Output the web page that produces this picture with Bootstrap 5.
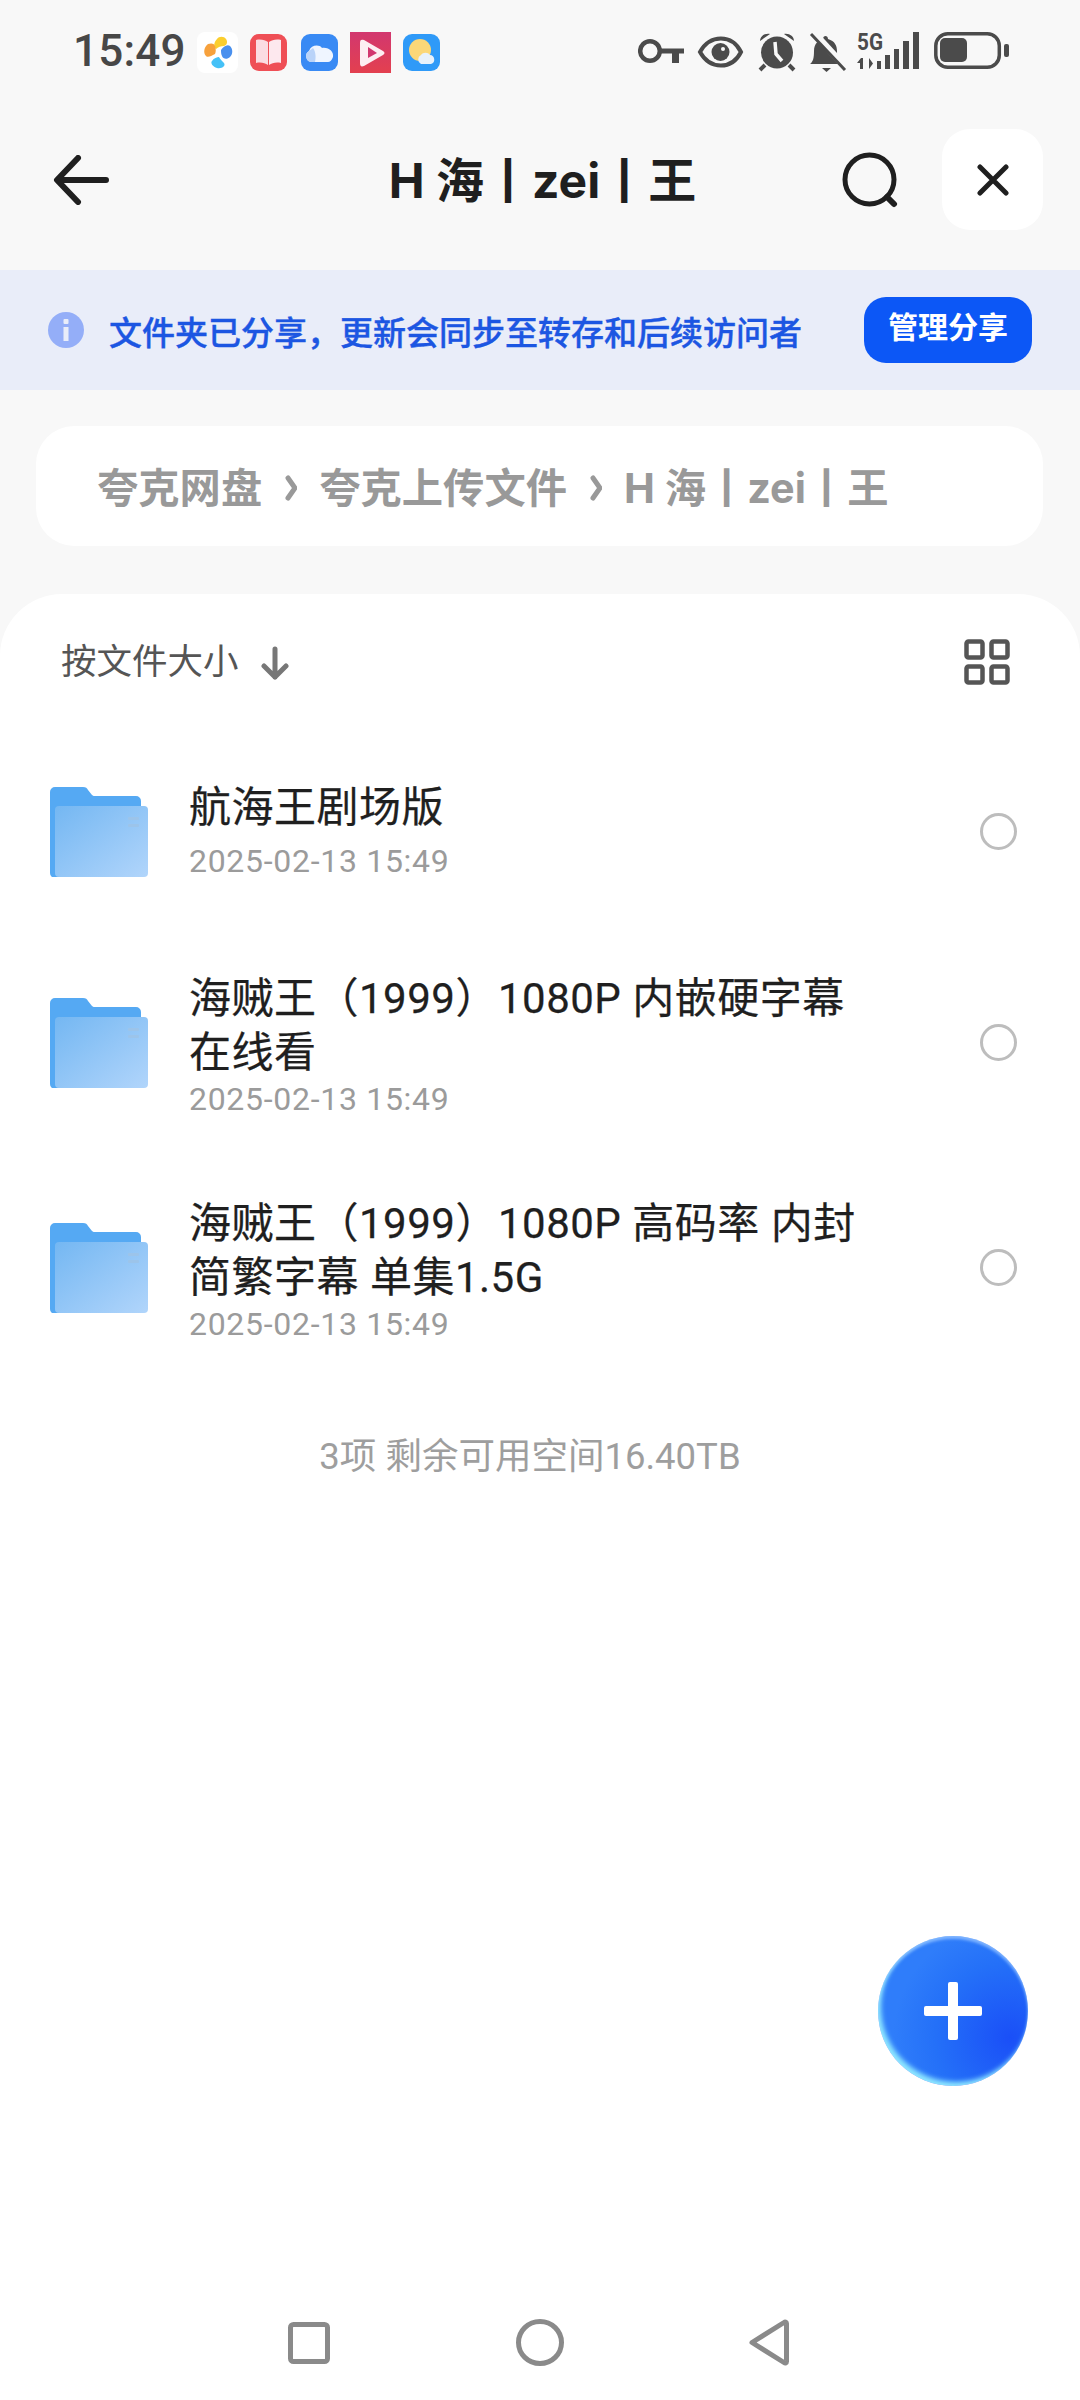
<!DOCTYPE html>
<html lang="zh-CN">
<head>
<meta charset="utf-8">
<title>H 海丨zei丨王</title>
<link href="https://cdn.jsdelivr.net/npm/bootstrap@5.3.0/dist/css/bootstrap.min.css" rel="stylesheet">
<style>
html,body{height:2400px;width:1080px;margin:0}
body{background:#f8f8f8;font-family:Roboto,"Noto Sans CJK SC",sans-serif;color:#1f1f1f;overflow:hidden}
.phone{position:relative;height:2400px}
.stat{height:104px;padding:0 71px 0 73px;color:#484848}
.clock{font-size:44px;font-weight:500;line-height:1;width:110px;margin-right:14px;margin-top:-2px;color:#474747;letter-spacing:.2px;flex:none}
.apps{gap:12px}
.apps svg:nth-child(3){margin-left:2px}
.head{height:166px;padding:0 37px 15px 53px}
.head-title{font-family:Inter,"Noto Sans CJK SC",sans-serif;font-size:48px;font-weight:700;line-height:1;color:#1f1f1f;white-space:nowrap;padding-left:134px;margin-top:3px}
.closer{width:101px;height:101px;border-radius:28px;background:#fff;margin-left:44px;border:0;padding:0;flex:none}
.notice{height:120px;background:#e9edf9;padding:0 48px 0 48px}
.notice-text{font-size:33px;font-weight:500;-webkit-text-stroke:.4px #1c56e2;color:#1c56e2;margin-left:25px;white-space:nowrap;line-height:1;margin-top:6px}
.manage{width:168px;height:66px;border-radius:22px;background:#0c57f6;border:0;color:#fff;font-size:30px;font-weight:700;line-height:1;padding:0 0 5px}
.manage:hover{background:#0c57f6;color:#fff}
.crumb{margin:36px 37px 48px 36px;height:120px;border-radius:38px;background:#fff;padding:0 61px;color:#999;font-family:Inter,"Noto Sans CJK SC",sans-serif;font-size:41.300px;font-weight:700;white-space:nowrap}
.crumb span{margin-top:5px}
.crumb svg{margin:4px 22px 0 23px;flex:none}
.sheet{background:#fff;border-radius:62px 62px 0 0;flex:1 1 auto;min-height:0}
.sheet-head{height:135px;padding:0 70px 0 61px;color:#555;font-size:35.500px}
.sheet-head span{margin-top:3px}
.sheet-head svg.arr{margin-left:21px;margin-top:2px}
.rows{margin-top:4px}
.rowi{min-height:197px;padding:35.500px 63px;padding-left:50px;border:0;background:transparent}
.rowi .txt{margin-left:41px;width:700px;padding-top:6px}
.rowi.solo .txt{padding-top:0}
.rowi.solo .dt{margin-top:7px}
.ttl{font-size:42px;line-height:54px;color:#1f1f1f;font-weight:400;letter-spacing:.5px;-webkit-text-stroke:.25px #1f1f1f}
.dt{font-size:32px;line-height:38px;color:#9b9b9b;letter-spacing:.7px;margin-bottom:2px}
.tick{width:37px;height:37px;border-radius:50%;border:3px solid #bdbdbd;margin-left:auto;flex:none}
.tail{font-size:36.500px;color:#9e9e9e;margin-top:55px;line-height:44px;padding-right:20px}
.fab{position:absolute;left:878px;top:1936px;width:150px;height:150px;border-radius:50%;border:0;padding:0;background:radial-gradient(circle at 88% 68%,#1a4ff7 0,#2470f8 45%,#2f7dfa 70%),#2f7dfa;box-shadow:inset 3px -4px 5px #8fe8ff,inset 0 3px 3px #7fb4ff}
.navb{height:114px;background:#fff}
.nvi{margin-left:260px}
</style>
</head>
<body>
<div class="phone d-flex flex-column">
  <div class="stat d-flex align-items-center flex-shrink-0">
    <span class="clock">15:49</span>
    <div class="apps d-flex align-items-center">
      <svg width="41" height="41" viewBox="0 0 41 41"><rect width="41" height="41" rx="8" fill="#fff"/><path d="M19 17c-3-2-2-7 1-10 2-3 7-3 9 0 2 3 1 6-2 7-3 0-6 1-8 3z" fill="#fbce2e"/><path d="M18 22c-4 2-7 4-9 2-3-3-2-9 2-12 3-1 6-1 7 2 1 3 1 6 0 8z" fill="#f7a13c"/><path d="M24 18c2-3 6-6 9-4 3 3 3 8 0 11-3 3-7 2-8-1-1-2-1-4-1-6z" fill="#4a90ee"/><path d="M22 25c1 2 3 4 5 6 2 3-2 6-7 5-4-1-7-5-5-7 2-3 5-4 7-4z" fill="#45c1f7"/></svg>
      <svg width="37" height="37" viewBox="0 0 37 37"><rect width="37" height="37" rx="9" fill="#ef4f56"/><path d="M6 6c5-1 9 0 12 2v23c-3-2-7-3-12-2z" fill="#fbdce2"/><path d="M31 6c-5-1-9 0-12 2v23c3-2 7-3 12-2z" fill="#fde8ee"/></svg>
      <svg width="37" height="37" viewBox="0 0 37 37"><rect width="37" height="37" rx="9" fill="#398af4"/><path d="M10 28a6 6 0 0 1-2-11c2-6 10-7 13-3 7-1 12 4 11 9-1 3-3 5-5 5z" fill="#eff5ff"/><path d="M10 28a6 6 0 0 1-2-11l4-3c3 4 3 10 2 14z" fill="#b9d3f9"/></svg>
      <svg width="41" height="41" viewBox="0 0 41 41"><defs><linearGradient id="pk" x1="0" y1="0" x2="0" y2="1"><stop offset="0" stop-color="#d2376f"/><stop offset="1" stop-color="#e3404f"/></linearGradient></defs><rect width="41" height="41" fill="url(#pk)"/><path d="M14 8l19 11c2 1 2 3 0 4L14 34c-3 1-4 0-4-3V11c0-3 1-4 4-3z" fill="#fdeef2"/><path d="M18 15l9 6-9 5z" fill="#d2376f"/></svg>
      <svg width="37" height="37" viewBox="0 0 37 37"><rect width="37" height="37" rx="9" fill="#2f9af8"/><circle cx="17" cy="16" r="11" fill="#fbd778"/><path d="M18 30a5 5 0 0 1 0-9c2-3 7-3 9 0 5 0 6 8 1 9z" fill="#e8f1fb"/></svg>
    </div>
    <svg class="ms-auto flex-shrink-0" width="371" height="60" viewBox="0 -10 371 60" fill="#4b4b4b">
      <circle cx="12" cy="19" r="9.800" fill="none" stroke="#4b4b4b" stroke-width="4.500"/><path d="M22 16.500h24v5H41v9.500h-7v-9.500H22z"/>
      <path d="M62 20c10-18 32-18 41 0-9 18-31 18-41 0z" fill="none" stroke="#4b4b4b" stroke-width="4"/><circle cx="82.500" cy="20" r="9"/><circle cx="85" cy="17" r="2" fill="#f8f8f8"/>
      <circle cx="139" cy="20.500" r="16"/><path d="M137 10l1 12 6 7" fill="none" stroke="#f8f8f8" stroke-width="3.500"/><path d="M122 9c0-5 5-8 10-7zM156 9c0-5-5-8-10-7z"/><path d="M127 33l-5 5M151 33l5 5" stroke="#4b4b4b" stroke-width="4"/>
      <path d="M172 32c3-2 4-6 4-13 0-8 5-11 9-12 0-4 5-4 5 0 7 2 9 7 9 12 0 7 1 10 4 13z"/><path d="M184 36h9l-4.500 4z"/><path d="M176 1l33 36" stroke="#f8f8f8" stroke-width="7"/><path d="M173 2l34 36" stroke="#4b4b4b" stroke-width="3"/>
      <text x="219" y="18" font-family="Roboto,sans-serif" font-weight="700" font-size="23" fill="#4b4b4b" textLength="26" lengthAdjust="spacingAndGlyphs">5G</text>
      <path d="M223 26l-4 5h3v6h3V26zM231 26v11l4-5.500zM239 29h4v8h-4zM247 23h5v14h-5zM256 17h5v20h-5zM265 9h6v28h-6zM275 0h6v37h-6z"/>
      <rect x="297.800" y="1.800" width="63.500" height="33.500" rx="12" fill="none" stroke="#4b4b4b" stroke-width="3.500"/><rect x="302" y="6" width="27" height="24" rx="5"/><rect x="366" y="12" width="5" height="13" rx="2"/>
    </svg>
  </div>

  <div class="head d-flex align-items-center flex-shrink-0">
    <svg class="flex-shrink-0" width="56" height="50" viewBox="0 0 56 50" fill="none" stroke="#1f1f1f" stroke-width="6" stroke-linecap="round" stroke-linejoin="round"><path d="M53 25H5M25 3L4 25l21 22"/></svg>
    <div class="head-title flex-grow-1 text-center">H 海丨zei丨王</div>
    <svg class="flex-shrink-0" width="56" height="56" viewBox="0 0 56 56" fill="none" stroke="#1f1f1f" stroke-linecap="round"><circle cx="27.500" cy="27.500" r="24.500" stroke-width="5"/><path d="M45 45l7 7" stroke-width="6"/></svg>
    <button class="closer d-flex align-items-center justify-content-center" type="button" aria-label="关闭">
      <svg width="32" height="32" viewBox="0 0 32 32" fill="none" stroke="#1f1f1f" stroke-width="5" stroke-linecap="round"><path d="M3 3l26 26M29 3L3 29"/></svg>
    </button>
  </div>

  <div class="notice d-flex align-items-center flex-shrink-0">
    <svg class="flex-shrink-0" width="36" height="36" viewBox="0 0 36 36"><circle cx="18" cy="18" r="18" fill="#94aef8"/><rect x="15.500" y="7" width="5" height="5" rx="1" fill="#e9edf9"/><rect x="15.500" y="15" width="5" height="14" fill="#e9edf9"/></svg>
    <span class="notice-text">文件夹已分享，更新会同步至转存和后续访问者</span>
    <button class="manage btn ms-auto d-flex align-items-center justify-content-center" type="button">管理分享</button>
  </div>

  <div class="crumb d-flex align-items-center flex-shrink-0">
    <span>夸克网盘</span>
    <svg width="12" height="26" viewBox="0 0 12 26" fill="none" stroke="#999" stroke-width="5" stroke-linecap="round" stroke-linejoin="round"><path d="M3 3l7 10-7 10"/></svg>
    <span>夸克上传文件</span>
    <svg width="12" height="26" viewBox="0 0 12 26" fill="none" stroke="#999" stroke-width="5" stroke-linecap="round" stroke-linejoin="round"><path d="M3 3l7 10-7 10"/></svg>
    <span>H 海丨zei丨王</span>
  </div>

  <div class="sheet d-flex flex-column">
    <div class="sheet-head d-flex align-items-center flex-shrink-0">
      <span>按文件大小</span>
      <svg class="arr" width="30" height="34" viewBox="0 0 30 34" fill="none" stroke="#777" stroke-width="5" stroke-linecap="round" stroke-linejoin="round"><path d="M15 3v28M4 20l11 11 11-11"/></svg>
      <svg class="ms-auto" width="46" height="46" viewBox="0 0 46 46" fill="none" stroke="#555" stroke-width="4.500"><rect x="2.500" y="2.500" width="16" height="16" rx="2"/><rect x="27.500" y="2.500" width="16" height="16" rx="2"/><rect x="2.500" y="27.500" width="16" height="16" rx="2"/><rect x="27.500" y="27.500" width="16" height="16" rx="2"/></svg>
    </div>

    <div class="rows list-group list-group-flush">
      <div class="list-group-item rowi solo d-flex align-items-center">
        <svg class="flex-shrink-0" width="98" height="90" viewBox="0 0 98 90"><use href="#fld"/></svg>
        <div class="txt"><div class="ttl">航海王剧场版</div><div class="dt">2025-02-13 15:49</div></div>
        <span class="tick"></span>
      </div>
      <div class="list-group-item rowi d-flex align-items-center">
        <svg class="flex-shrink-0" width="98" height="90" viewBox="0 0 98 90"><use href="#fld"/></svg>
        <div class="txt"><div class="ttl">海贼王（1999）1080P 内嵌硬字幕<br>在线看</div><div class="dt">2025-02-13 15:49</div></div>
        <span class="tick"></span>
      </div>
      <div class="list-group-item rowi d-flex align-items-center">
        <svg class="flex-shrink-0" width="98" height="90" viewBox="0 0 98 90"><use href="#fld"/></svg>
        <div class="txt"><div class="ttl">海贼王（1999）1080P 高码率 内封<br>简繁字幕 单集1.5G</div><div class="dt">2025-02-13 15:49</div></div>
        <span class="tick"></span>
      </div>
    </div>
    <div class="tail text-center">3项 剩余可用空间16.40TB</div>
  </div>

  <div class="navb d-flex align-items-center flex-shrink-0">
    <svg class="nvi" width="560" height="50" viewBox="0 0 560 50" fill="none" stroke="#8a8a8a" stroke-width="5" stroke-linejoin="round">
      <rect x="30.500" y="6.500" width="37" height="37" rx="3"/>
      <ellipse cx="280" cy="24.500" rx="21.500" ry="21"/>
      <path d="M492 24.500l32-20c1.500-1 2.500 0 2.500 1v38c0 1-1 2-2.500 1z"/>
    </svg>
  </div>

  <button class="fab d-flex align-items-center justify-content-center" type="button" aria-label="新建">
    <svg width="58" height="58" viewBox="0 0 58 58" fill="#fff"><rect x="24" y="0" width="10" height="58" rx="2"/><rect x="0" y="24" width="58" height="10" rx="2"/></svg>
  </button>
</div>

<svg width="0" height="0" class="position-absolute">
  <defs>
    <linearGradient id="fg" x1="0" y1="0" x2="1" y2="1"><stop offset="0" stop-color="#74b7f2"/><stop offset="1" stop-color="#b1d5fb"/></linearGradient>
    <symbol id="fld" viewBox="0 0 98 90">
      <path d="M0 5a5 5 0 0 1 5-5h28c3 0 4 1 5 3l4 5c1 1 2 1 4 1h40a5 5 0 0 1 5 5v72a5 5 0 0 1-5 5H5a5 5 0 0 1-5-5z" fill="#55a9f3"/>
      <rect x="5" y="19" width="93" height="71" rx="4" fill="url(#fg)"/>
      <rect x="78" y="30" width="11" height="3" rx="1" fill="#9cc4ea"/><rect x="78" y="37" width="11" height="3" rx="1" fill="#9cc4ea"/>
    </symbol>
  </defs>
</svg>
</body>
</html>
